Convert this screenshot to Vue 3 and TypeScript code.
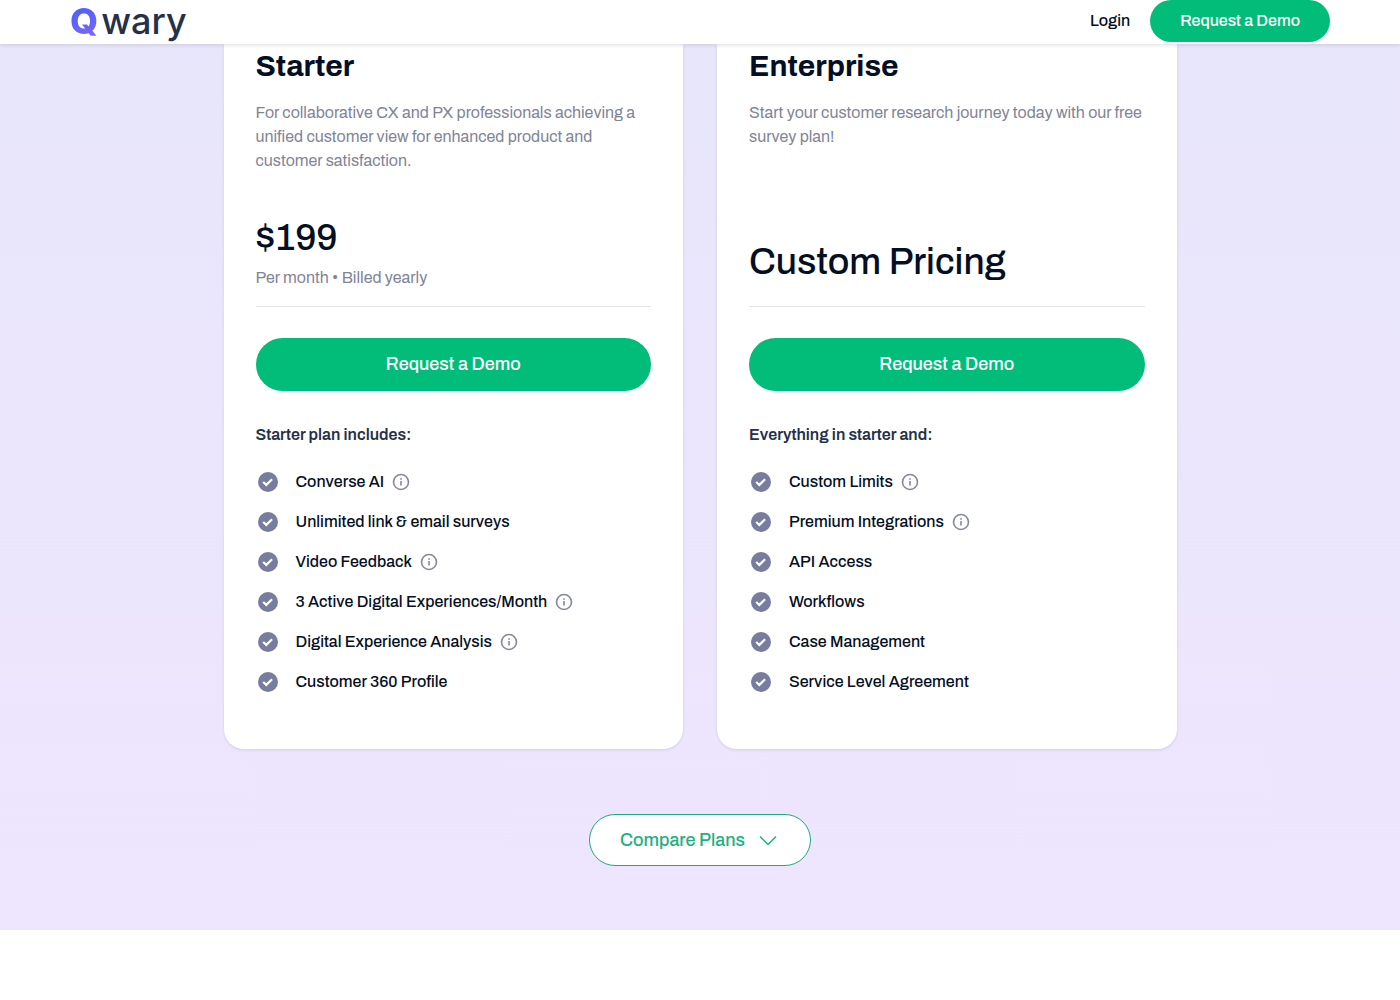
<script setup lang="ts">
interface Feature {
  label: string
  info?: boolean
}

interface Plan {
  name: string
  description: string
  price: string
  note?: string
  listTitle: string
  features: Feature[]
}

const plans: Plan[] = [
  {
    name: 'Starter',
    description:
      'For collaborative CX and PX professionals achieving a unified customer view for enhanced product and customer satisfaction.',
    price: '$199',
    note: 'Per month • Billed yearly',
    listTitle: 'Starter plan includes:',
    features: [
      { label: 'Converse AI', info: true },
      { label: 'Unlimited link & email surveys' },
      { label: 'Video Feedback', info: true },
      { label: '3 Active Digital Experiences/Month', info: true },
      { label: 'Digital Experience Analysis', info: true },
      { label: 'Customer 360 Profile' },
    ],
  },
  {
    name: 'Enterprise',
    description: 'Start your customer research journey today with our free survey plan!',
    price: 'Custom Pricing',
    listTitle: 'Everything in starter and:',
    features: [
      { label: 'Custom Limits', info: true },
      { label: 'Premium Integrations', info: true },
      { label: 'API Access' },
      { label: 'Workflows' },
      { label: 'Case Management' },
      { label: 'Service Level Agreement' },
    ],
  },
]
</script>

<template>
  <header class="topbar">
    <a href="#" class="logo"><span class="logo-q">Q</span><span class="logo-rest">wary</span></a>
    <nav class="nav">
      <a href="#" class="login">Login</a>
      <button type="button" class="btn btn-small">Request a Demo</button>
    </nav>
  </header>

  <main class="pricing">
    <div class="plans">
      <section v-for="plan in plans" :key="plan.name" class="card">
        <h2 class="name">{{ plan.name }}</h2>
        <p class="description">{{ plan.description }}</p>
        <div class="price-block">
          <div class="price">{{ plan.price }}</div>
          <div v-if="plan.note" class="note">{{ plan.note }}</div>
        </div>
        <button type="button" class="btn btn-large">Request a Demo</button>
        <h3 class="list-title">{{ plan.listTitle }}</h3>
        <ul class="features">
          <li v-for="feature in plan.features" :key="feature.label" class="feature">
            <svg class="check" viewBox="0 0 24 24" aria-hidden="true">
              <circle cx="12" cy="12" r="10" fill="#787d9e" />
              <path d="M7.2 12l3.1 2.9 5.8-5.6" fill="none" stroke="#fff" stroke-width="2.2" />
            </svg>
            <span class="feature-label">{{ feature.label }}</span>
            <svg v-if="feature.info" class="info" viewBox="0 0 20 20" aria-hidden="true">
              <circle cx="10" cy="10" r="7.5" fill="none" stroke="#85889a" stroke-width="1.6" />
              <path d="M10 9v4.6M10 6.2v1.6" fill="none" stroke="#85889a" stroke-width="1.6" />
            </svg>
          </li>
        </ul>
      </section>
    </div>

    <button type="button" class="compare">
      Compare Plans
      <svg class="chevron" viewBox="0 0 18 18" aria-hidden="true">
        <path d="M1 5.5l8 8 8-8" fill="none" stroke="currentColor" stroke-width="1.5" />
      </svg>
    </button>
  </main>
</template>

<style>
body {
  margin: 0;
  background: #fff;
  font-family: Archivo, "Liberation Sans", Arial, sans-serif;
  font-size: 16px;
  line-height: 24px;
  color: #050f24;
}
</style>

<style scoped>
.topbar {
  position: sticky;
  top: 0;
  z-index: 1;
  display: flex;
  align-items: center;
  justify-content: space-between;
  box-sizing: border-box;
  height: 44px;
  padding: 0 70px 2px;
  background: #fff;
  box-shadow: 0 1px 4px rgba(20, 20, 60, 0.14);
}

.logo {
  display: flex;
  align-items: baseline;
  font-family: Inter, sans-serif;
  font-size: 36px;
  line-height: 40px;
  color: #25304a;
  text-decoration: none;
}

.logo-q {
  font-weight: 800;
  color: transparent;
  background: linear-gradient(160deg, #3f5efb, #8468f8);
  background-clip: text;
}

.logo-rest {
  margin-left: 3px;
  font-weight: 500;
}

.nav {
  display: flex;
  align-items: center;
  gap: 20px;
}

.login {
  color: inherit;
  font-weight: 500;
  text-decoration: none;
}

.btn {
  padding: 0 30px 2px;
  border: 0;
  border-radius: 28px;
  background: #02bd7a;
  color: #fff;
  font-family: inherit;
  font-weight: 500;
  cursor: pointer;
}

.btn-small {
  height: 42px;
  font-size: 16px;
}

.btn-large {
  width: 100%;
  height: 53px;
  margin-top: 31px;
  font-size: 18px;
}

.pricing {
  display: flex;
  flex-direction: column;
  align-items: center;
  padding: 0 24px 64px;
  background: linear-gradient(#e8e6fa, #eee5fe);
}

.plans {
  display: grid;
  grid-template-columns: 1fr 1fr;
  gap: 34px;
  width: 100%;
  max-width: 953px;
}

.card {
  padding: 4px 32px 47px;
  border-radius: 0 0 20px 20px;
  background: #fff;
  box-shadow: 0 1px 3px rgba(30, 30, 80, 0.12);
}

.name {
  margin: 0;
  font-size: 30px;
  font-weight: 700;
  line-height: 36px;
}

.description {
  min-height: 72px;
  margin: 17px 0 0;
  color: #7f8497;
}

.price-block {
  display: flex;
  flex-direction: column;
  justify-content: flex-end;
  min-height: 117px;
  padding-bottom: 16px;
  border-bottom: 1px solid #e3e4e8;
}

.price {
  font-size: 37px;
  font-weight: 500;
  line-height: 56px;
}

.note {
  color: #7f8497;
}

.list-title {
  margin: 32px 0 15px;
  font-size: 16px;
  font-weight: 600;
  color: #25304a;
}

.features {
  margin: 0;
  padding: 0;
  list-style: none;
}

.feature {
  display: flex;
  align-items: center;
  height: 40px;
  font-weight: 500;
}

.check {
  width: 24px;
  height: 24px;
}

.feature-label {
  margin: 0 7px 0 16px;
}

.info {
  width: 20px;
  height: 20px;
}

.compare {
  display: flex;
  align-items: center;
  gap: 14px;
  height: 52px;
  margin-top: 65px;
  padding: 0 33px 0 30px;
  border: 1px solid #20a97c;
  border-radius: 26px;
  background: #fff;
  color: #1db181;
  font-family: inherit;
  font-size: 18px;
  font-weight: 500;
  cursor: pointer;
}

.chevron {
  width: 18px;
  height: 18px;
}
</style>
